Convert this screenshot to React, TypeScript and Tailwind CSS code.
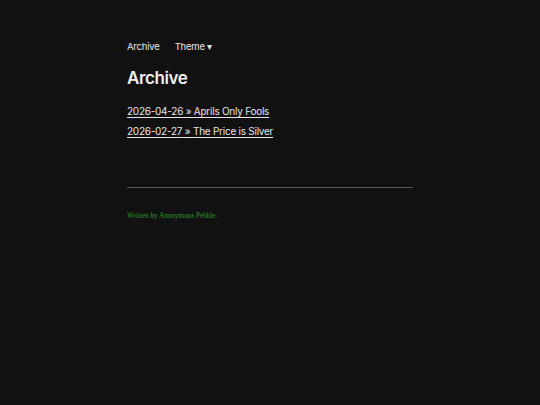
export default function App() {
  const posts = [
    { date: "2026-04-26", title: "Aprils Only Fools" },
    { date: "2026-02-27", title: "The Price is Silver" },
  ];
  return (
    <div className="min-h-[405px] w-full bg-[#111111] text-[#e6e6e6]" style={{ fontFamily: "Inter, 'Liberation Sans', sans-serif" }}>
      <div className="ml-[127px] w-[286px] pt-[40px]">
        <nav className="flex gap-[15px] text-[9.5px] leading-[14px] tracking-[-0.2px]">
          <a className="text-[#e6e6e6]">Archive</a>
          <span>Theme ▾</span>
        </nav>
        <h1 className="mt-[13px] text-[17px] font-semibold leading-[22px] tracking-[-0.4px] text-[#f0f0f0]">Archive</h1>
        <ul className="mt-[16px] flex flex-col gap-[7px] text-[10px] leading-[13px] tracking-[-0.25px]">
          {posts.map((p) => (
            <li key={p.date}>
              <a className="underline underline-offset-[2px]">
                {p.date} » {p.title}
              </a>
            </li>
          ))}
        </ul>
        <hr className="mt-[49px] border-t border-[#555555]" />
        <footer className="mt-[23px] text-[7.2px] leading-[10px] text-[#2a9a2a]" style={{ fontFamily: "'Liberation Serif', serif" }}>
          Written by Anonymous Pebble.
        </footer>
      </div>
    </div>
  );
}
